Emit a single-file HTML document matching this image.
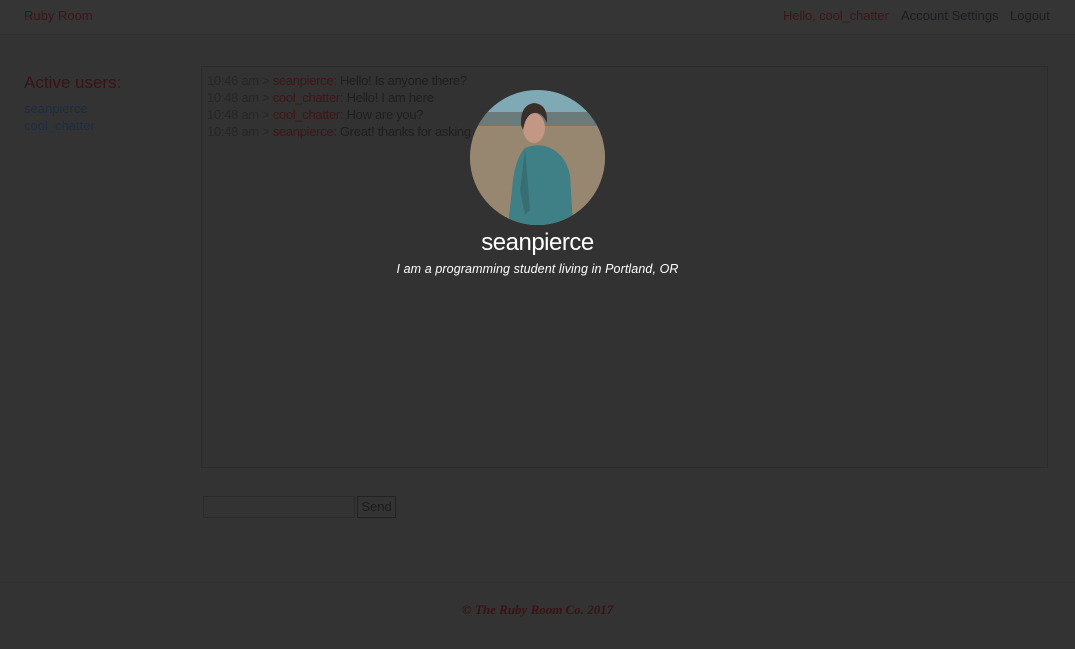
<!DOCTYPE html>
<html><head><style>
body{margin:0;width:1075px;height:649px;background:#333;font-family:"Liberation Sans",sans-serif;position:relative;overflow:hidden}
.nav{position:absolute;left:0;top:0;width:1075px;height:34px;background:#353535;border-bottom:1px solid #2f2f2f}
.abs{position:absolute;white-space:nowrap}
.red{color:#3d1515}
.dk{color:#1c1c20}
.chat{position:absolute;left:201px;top:66px;width:847px;height:402px;border:1px solid #2c2c2c;background:#323232}
.chat div{font-size:13px;line-height:17px;color:#1e1e1e;margin-left:5px;letter-spacing:-0.3px}
.chat .t{color:#262626}
.chat .u{color:#3e1616}
</style></head><body>
<div class="nav"></div>
<div class="abs red" style="left:24px;top:8px;font-size:13px">Ruby Room</div>
<div class="abs red" style="left:783px;top:8px;font-size:13px;letter-spacing:-0.1px">Hello, cool_chatter</div>
<div class="abs dk" style="left:901px;top:8px;font-size:13px">Account Settings</div>
<div class="abs dk" style="left:1010px;top:8px;font-size:13px">Logout</div>
<div class="abs" style="left:24px;top:73px;font-size:17px;color:#3a1212">Active users:</div>
<div class="abs" style="left:24px;top:100px;font-size:13px;color:#1c2c45;line-height:17px">seanpierce<br>cool_chatter</div>
<div class="chat" style="padding-top:5px;box-sizing:border-box">
<div><span class="t">10:46 am &gt; </span><span class="u">seanpierce:</span> Hello! Is anyone there?</div>
<div><span class="t">10:48 am &gt; </span><span class="u">cool_chatter:</span> Hello! I am here</div>
<div><span class="t">10:48 am &gt; </span><span class="u">cool_chatter:</span> How are you?</div>
<div><span class="t">10:48 am &gt; </span><span class="u">seanpierce:</span> Great! thanks for asking</div>
</div>
<div class="abs" style="left:203px;top:496px;width:150px;height:20px;border:1px solid #2a2a2a"></div>
<div class="abs" style="left:357px;top:496px;width:37px;height:20px;border:1px solid #222;font-size:13px;color:#1a1a1a;text-align:center;line-height:20px">Send</div>
<div class="abs" style="left:0;top:582px;width:1075px;height:1px;background:#303030"></div>
<div class="abs" style="left:462px;top:602px;font-size:13px;color:#3a1212;font-style:italic;font-weight:bold;font-family:'Liberation Serif',serif">© The Ruby Room Co. 2017</div>
<svg class="abs" style="left:470px;top:90px" width="135" height="135" viewBox="0 0 135 135">
<defs><clipPath id="c"><circle cx="67.5" cy="67.5" r="67.5"/></clipPath></defs>
<g clip-path="url(#c)">
<rect width="135" height="135" fill="#8a7c6a"/>
<rect width="135" height="25" fill="#7fa9b5"/>
<rect y="22" width="135" height="14" fill="#6b7a7a"/>
<rect y="36" width="135" height="99" fill="#978670"/>
<path d="M38 135 L42 100 Q44 70 55 58 Q65 54 75 56 Q95 62 100 85 L103 135Z" fill="#3f7f86"/>
<path d="M55 60 L50 100 L55 125 L60 120Z" fill="#376e74"/>
<ellipse cx="64" cy="38" rx="11" ry="15" fill="#c29884"/>
<path d="M51 35 Q50 15 64 13 Q78 14 77 33 Q72 22 64 23 Q56 24 53 40Z" fill="#3a2e2a"/>
</g></svg>
<div class="abs" style="left:0;width:1075px;text-align:center;top:229px;font-size:24px;color:#fff;letter-spacing:-0.5px">seanpierce</div>
<div class="abs" style="left:0;width:1075px;text-align:center;top:262px;font-size:12.5px;color:#fff;font-style:italic;letter-spacing:0.1px">I am a programming student living in Portland, OR</div>
</body></html>
